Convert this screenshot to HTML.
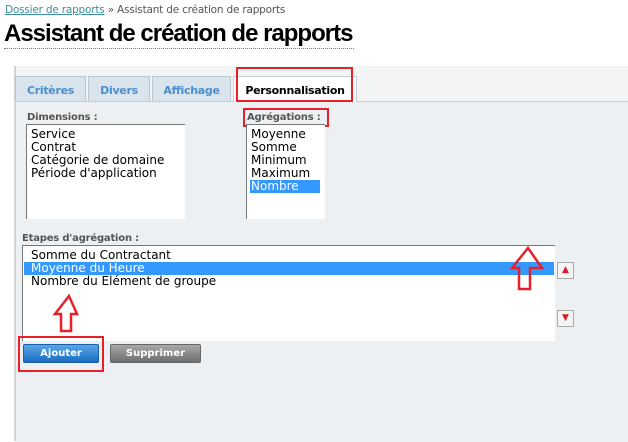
<!DOCTYPE html>
<html><head><meta charset="utf-8"><style>
body{margin:0;width:628px;height:441px;background:#fff;font-family:"DejaVu Sans","Liberation Sans",sans-serif;position:relative;overflow:hidden}
.a{position:absolute}
.bc{left:5px;top:4px;font-size:10.5px;color:#555;letter-spacing:-0.2px}
.bc span{color:#3a8fa0;text-decoration:underline}
h1{position:absolute;left:4px;top:20px;margin:0;font:bold 24px "Liberation Sans",Arial,sans-serif;color:#000;letter-spacing:-1px}
.dot{left:4px;top:48px;width:350px;border-top:1px dotted #777}
.panel{left:14px;top:66px;width:614px;height:375px;background:#f2f4f5;border-left:2px solid #cfd4d8}
.content{left:16px;top:101px;width:612px;height:340px;background:#ecf0f2;border-top:1px solid #c8d0d6}
.tab{top:76px;height:25px;background:#d9e4ec;border:1px solid #b8c6d0;border-bottom:none;font:bold 11px "DejaVu Sans",sans-serif;letter-spacing:-0.3px;color:#4a8fcf;text-align:center;line-height:27px;box-sizing:border-box}
.lbl{font:bold 10px "DejaVu Sans",sans-serif;color:#555;letter-spacing:-0.2px}
.lb{background:#fff;border:1px solid #777;border-right:none;border-bottom:none;font:12px "DejaVu Sans",sans-serif;color:#000;box-sizing:border-box;line-height:13px}
.lb div{padding-left:4px;white-space:nowrap}
.sel{background:#3399ff;color:#fff}
.red{border:2px solid #e8202a;box-sizing:border-box}
.btn{font:bold 10px "DejaVu Sans",sans-serif;color:#fff;text-align:center;line-height:17px;border-radius:2px;height:19px}
.sm{width:17px;height:17px;background:#f4f4f4;border:1px solid #aaa;box-sizing:border-box;color:#d0202a;font-size:9px;text-align:center;line-height:15px}
</style></head><body>
<div class="a bc"><span>Dossier de rapports</span> » Assistant de création de rapports</div>
<h1>Assistant de création de rapports</h1>
<div class="a dot"></div>
<div class="a panel"></div>
<div class="a content"></div>
<div class="a tab" style="left:15px;width:71px">Critères</div>
<div class="a tab" style="left:88px;width:62px">Divers</div>
<div class="a tab" style="left:152px;width:79px">Affichage</div>
<div class="a tab" style="left:233px;width:124px;height:26px;background:#fff;color:#000;border-color:#c8d0d6">Personnalisation</div>
<div class="a red" style="left:236px;top:67px;width:117px;height:35px"></div>

<div class="a lbl" style="left:27px;top:112px">Dimensions :</div>
<div class="a lb" style="left:26px;top:124px;width:159px;height:95px;padding-top:3px">
<div>Service</div><div>Contrat</div><div>Catégorie de domaine</div><div>Période d'application</div></div>
<div class="a lbl" style="left:247px;top:112px">Agrégations :</div>
<div class="a red" style="left:243px;top:108px;width:86px;height:19px"></div>
<div class="a lb" style="left:246px;top:124px;width:79px;height:95px;padding-top:3px">
<div>Moyenne</div><div>Somme</div><div>Minimum</div><div>Maximum</div><div class="sel" style="margin-left:3px;padding-left:1px;width:69px">Nombre</div></div>

<div class="a lbl" style="left:22px;top:233px">Etapes d'agrégation :</div>
<div class="a lb" style="left:22px;top:245px;width:533px;height:96px;padding-top:3px">
<div style="padding-left:8px">Somme du Contractant</div><div class="sel" style="margin:0 1px;padding-left:7px">Moyenne du Heure</div><div style="padding-left:8px">Nombre du Elément de groupe</div></div>
<div class="a sm" style="left:557px;top:262px">▲</div>
<div class="a sm" style="left:557px;top:310px">▼</div>

<div class="a btn" style="left:23px;top:344px;width:76px;background:linear-gradient(#5aa6e6,#1a6cc4);border:1px solid #1a5ea8;box-sizing:border-box">Ajouter</div>
<div class="a btn" style="left:110px;top:344px;width:91px;background:linear-gradient(#a8a8a8,#6e6e6e);border:1px solid #666;box-sizing:border-box">Supprimer</div>
<div class="a red" style="left:18px;top:336px;width:86px;height:36px"></div>

<svg class="a" style="left:0;top:0" width="628" height="441">
<path d="M69 296 L55 314 L61 314 L61 331 L71 331 L71 314 L77 314 Z" fill="none" stroke="#e8202a" stroke-width="2.5"/>
<path d="M528 248 L512 268 L519 268 L519 289 L530 289 L530 268 L542 268 Z" fill="none" stroke="#e8202a" stroke-width="2.5"/>
</svg>
</body></html>
